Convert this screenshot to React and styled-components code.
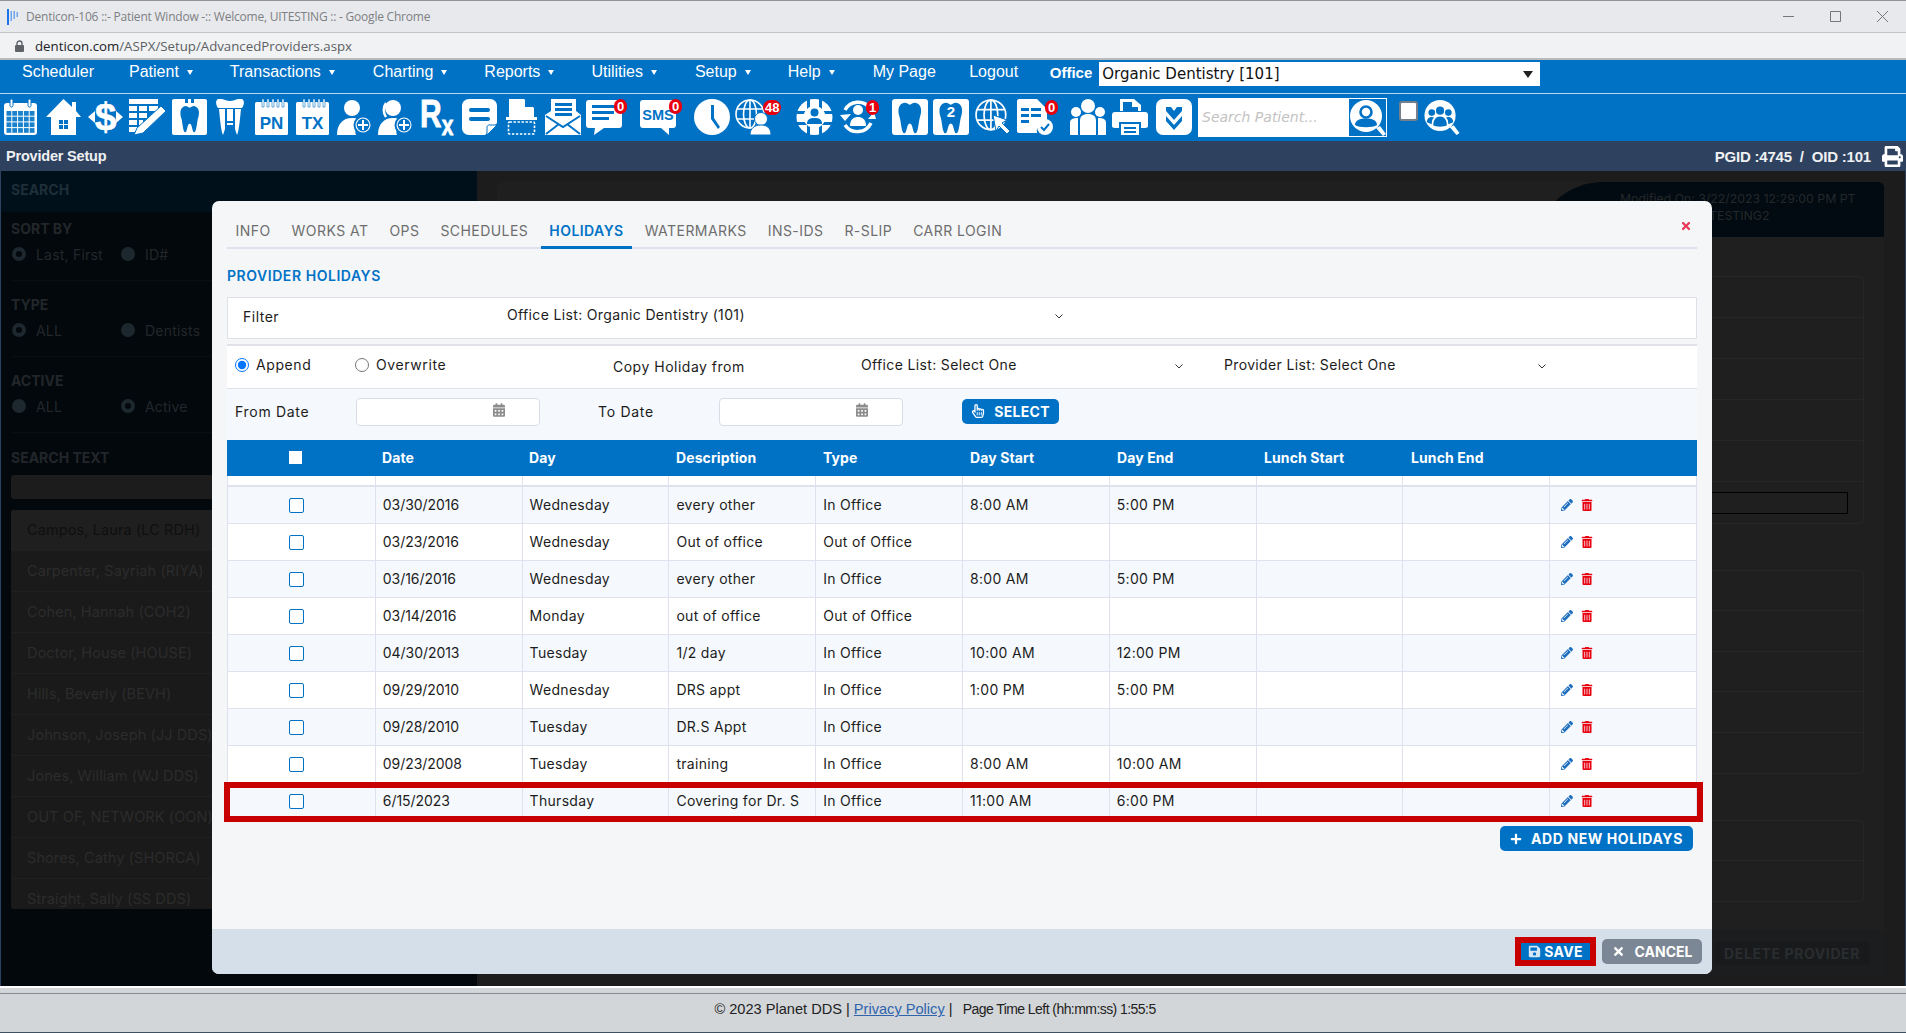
import styled, { createGlobalStyle } from "styled-components";
import { FaCalendarAlt, FaPencilAlt, FaPlus, FaPrint, FaRegHandPointer, FaSave, FaTimes, FaTrashAlt } from "react-icons/fa";

const BLUE = "#0072c6";
const MODAL_FONT = '"Inter", "Open Sans", sans-serif';

const GlobalStyle = createGlobalStyle`
  html, body { margin: 0; height: 100%; }
  #root { height: 100%; }
  *, *::before, *::after { box-sizing: border-box; }
`;

const Page = styled.div`
  height: 1033px;
  display: flex;
  flex-direction: column;
  overflow: hidden;
  font-family: "Liberation Sans", Arial, sans-serif;
  background: #1c1c1c;
`;

/* browser chrome */
const TitleBar = styled.div`
  height: 32px;
  flex: none;
  display: flex;
  align-items: center;
  padding: 0 0 0 7px;
  background: #e8e9ed;
  border-top: 1px solid #8f9296;
  font: 12px "Open Sans", sans-serif;
  color: #7d7f83;
`;

const WindowTitle = styled.span`
  margin-left: 8px;
  flex: 1;
  letter-spacing: -0.22px;
`;

const WindowButtons = styled.div`
  display: flex;
  align-items: center;
  gap: 36px;
  padding-right: 18px;
  svg { display: block; }
`;

const AddressBar = styled.div`
  height: 28px;
  flex: none;
  display: flex;
  align-items: center;
  gap: 11px;
  padding-left: 15px;
  background: #f1f2f4;
  border-top: 1px solid #c2c3c6;
  border-bottom: 2px solid #b9babc;
  font: 13.25px "Open Sans", sans-serif;
  color: #5c5f63;
  b { font-weight: 400; color: #202124; }
`;

/* app menu */
const MenuBar = styled.nav`
  height: 34px;
  flex: none;
  display: flex;
  align-items: center;
  padding-left: 22px;
  background: ${BLUE};
  border-bottom: 1px solid #b9d7ee;
  color: #fff;
  font-size: 16px;
`;

const MenuItem = styled.span`
  display: flex;
  align-items: center;
  margin-right: ${(p) => p.$gap}px;
  padding-bottom: 9px;
  white-space: nowrap;
  &::after {
    content: ${(p) => (p.$caret ? '""' : "none")};
    margin-left: 8px;
    border: 3.5px solid transparent;
    border-top: 5px solid #fff;
    border-bottom: 0;
  }
`;

const OfficeLabel = styled.span`
  font-weight: 700;
  font-size: 15px;
  margin-right: 7px;
  padding-bottom: 9px;
`;

const OfficeSelect = styled.div`
  width: 441px;
  height: 24px;
  margin-bottom: 5px;
  display: flex;
  align-items: center;
  justify-content: space-between;
  padding: 0 7px 0 3px;
  background: #fff;
  color: #111;
  font: 15px "DejaVu Sans", sans-serif;
  &::after {
    content: "";
    border: 5px solid transparent;
    border-top: 7px solid #222;
    border-bottom: 0;
  }
`;

const ToolBar = styled.div`
  height: 47px;
  flex: none;
  display: flex;
  align-items: center;
  padding: 0 0 1px 4px;
  background: ${BLUE};
`;

const ToolSlot = styled.div`
  position: relative;
  flex: none;
  width: ${(p) => p.$w}px;
  height: 36px;
  svg { display: block; height: 36px; fill: #fff; }
`;

const TallSvg = styled.svg`
  ${ToolSlot} && {
    height: ${(p) => p.$h}px;
    margin-top: ${(p) => (36 - p.$h) / 2}px;
  }
`;

const Badge = styled.span`
  position: absolute;
  top: ${(p) => p.$top ?? 0}px;
  left: ${(p) => p.$left}px;
  min-width: 13px;
  height: 15px;
  padding: 0 2px;
  border-radius: 8px;
  background: #e8000f;
  color: #fff;
  font: 700 13px/15px "Liberation Sans", sans-serif;
  text-align: center;
`;

const PatientSearch = styled.div`
  flex: none;
  width: 189px;
  height: 39px;
  margin-right: 12px;
  display: flex;
  align-items: center;
  background: #fff;
  border: 1px solid #fff;
`;

const PatientInput = styled.input`
  flex: 1;
  min-width: 0;
  height: 100%;
  border: 0;
  outline: 0;
  padding: 0 0 0 3px;
  background: transparent;
  font: italic 14px "DejaVu Sans", sans-serif;
  &::placeholder { color: #c3c3c3; opacity: 1; }
`;

const PatientButton = styled.div`
  flex: none;
  width: 37px;
  height: 37px;
  background: ${BLUE};
  svg { display: block; }
`;

const ToolCheck = styled.span`
  flex: none;
  width: 19px;
  height: 20px;
  margin: -13px 5px 0 0;
  background: #fff;
  border: 2px solid #77808a;
  border-radius: 3px;
`;

const PageTitle = styled.div`
  height: 30px;
  flex: none;
  display: flex;
  align-items: center;
  justify-content: space-between;
  padding: 0 3px 0 6px;
  background: #2e4260;
  color: #eef0f2;
  font-weight: 700;
  font-size: 14.5px;
  letter-spacing: -0.2px;
`;

const TitleRight = styled.div`
  display: flex;
  align-items: center;
  gap: 11px;
  font-size: 15px;
  white-space: pre;
  svg { width: 21px; height: 21px; fill: #fff; }
`;

/* dimmed page behind the dialog */
const Workspace = styled.main`
  position: relative;
  flex: 1;
  min-height: 0;
  display: flex;
  background: #1c1c1c;
  border-left: 1px solid #2e4260;
  border-right: 1px solid #2e4260;
`;

const Sidebar = styled.aside`
  width: 476px;
  flex: none;
  background: #03080c;
  font: 600 14px ${MODAL_FONT};
  color: #20262a;
`;

const SideHead = styled.div`
  height: 41px;
  display: flex;
  align-items: center;
  padding: 0 10px 4px;
  background: #00101a;
  color: #1f2e38;
  font-weight: 700;
`;

const SideSection = styled.section`
  height: ${(p) => p.$h}px;
  margin: 0 10px;
  display: flex;
  flex-direction: column;
  justify-content: flex-end;
  padding-bottom: 18px;
  border-bottom: 1px solid #0b0e10;
`;

const SideLabel = styled.div`
  height: 16px;
  line-height: 16px;
  margin-bottom: 9px;
  font-weight: 700;
  color: #22262a;
`;

const SideChoices = styled.div`
  display: grid;
  grid-template-columns: 109px 200px;
`;

const SideChoice = styled.span`
  display: flex;
  align-items: center;
  gap: 10px;
  height: 16px;
  font-weight: 400;
  letter-spacing: 0.2px;
  color: #22272b;
  &::before {
    content: "";
    width: 14px;
    height: 14px;
    border-radius: 50%;
    margin-left: 1px;
    background: ${(p) => (p.$on ? "#03080c" : "#1d272e")};
    border: ${(p) => (p.$on ? "4px solid #1d272e" : "0")};
  }
`;

const SideSearch = styled.div`
  margin: 0 10px;
  padding-top: 17px;
`;

const SideField = styled.div`
  height: 24px;
  margin-top: 0;
  background: #1c1c1c;
  border-radius: 3px;
`;

const SideList = styled.ul`
  list-style: none;
  margin: 11px 10px 0;
  padding: 0;
  height: 399px;
  overflow: hidden;
  background: #1a1a1a;
  border-radius: 3px;
`;

const SideItem = styled.li`
  height: 41px;
  line-height: 39px;
  padding-left: 16px;
  border-bottom: 1px solid #202020;
  font-weight: 400;
  font-size: 14.5px;
  letter-spacing: 0.1px;
  white-space: nowrap;
  color: ${(p) => (p.$on ? "#0f0f0f" : "#2c2c2c")};
  background: ${(p) => (p.$on ? "#1f1f1f" : "transparent")};
`;

const DetailCard = styled.div`
  flex: 1;
  margin: 11px 21px 0 20px;
  height: 794px;
  display: flex;
  flex-direction: column;
  background: #1f1f1f;
  border-radius: 6px 6px 0 0;
`;

const DetailHead = styled.div`
  height: 55px;
  flex: none;
  display: flex;
  justify-content: flex-end;
`;

const HeadTag = styled.div`
  width: 344px;
  padding: 8px 0 0 80px;
  background: #020b11;
  border-radius: 70px 6px 0 0 / 60px 6px 0 0;
  font: 400 12.3px/17px ${MODAL_FONT};
  color: #24282b;
  white-space: nowrap;
`;

const DetailGroups = styled.div`
  flex: 1;
  display: flex;
  flex-direction: column;
  gap: 46px;
  padding: 39px 20px 0 14px;
`;

const DetailGroup = styled.div`
  border: 1px solid #262626;
  border-radius: 4px;
`;

const DetailRow = styled.div`
  height: ${(p) => p.$h ?? 41}px;
  display: flex;
  align-items: center;
  justify-content: flex-end;
  padding-right: 15px;
  border-bottom: 1px solid #262626;
  &:last-child { border-bottom: 0; }
`;

const BlackField = styled.div`
  width: 400px;
  height: 22px;
  border: 1px solid #000;
`;

const DetailFoot = styled.div`
  height: 46px;
  flex: none;
  display: flex;
  align-items: center;
  justify-content: flex-end;
  padding-right: 14px;
  background: #1c1d1e;
`;

const DeleteButton = styled.div`
  height: 24px;
  padding: 0 10px;
  display: flex;
  align-items: center;
  border-radius: 5px;
  background: #181a1b;
  color: #2a2d30;
  font: 700 14px ${MODAL_FONT};
  letter-spacing: 0.6px;
`;

/* dialog */
const Modal = styled.section`
  position: absolute;
  top: 30px;
  left: 211px;
  width: 1500px;
  height: 773px;
  display: flex;
  flex-direction: column;
  background: #f5f6f8;
  border-radius: 7px;
  font: 400 14px ${MODAL_FONT};
  color: #1c1c1c;
`;

const ModalBody = styled.div`
  flex: 1;
  padding: 0 15px;
  position: relative;
`;

const CloseButton = styled.span`
  position: absolute;
  top: 19px;
  right: 20px;
  color: #ea3a55;
  font-size: 12px;
  line-height: 12px;
  svg { display: block; }
`;

const Tabs = styled.div`
  height: 48px;
  display: flex;
  gap: 4px;
  border-bottom: 2px solid #dfe1ee;
`;

const Tab = styled.span`
  height: 48px;
  padding: 14px 8.5px 0;
  display: flex;
  align-items: center;
  font-size: 14px;
  letter-spacing: 0.45px;
  white-space: nowrap;
  color: ${(p) => (p.$on ? BLUE : "#6e6e6e")};
  font-weight: ${(p) => (p.$on ? 600 : 400)};
  border-bottom: 3px solid ${(p) => (p.$on ? BLUE : "transparent")};
`;

const SectionTitle = styled.h2`
  margin: 0;
  height: 48px;
  display: flex;
  align-items: center;
  padding-top: 5px;
  font-size: 14px;
  font-weight: 600;
  color: ${BLUE};
  letter-spacing: 0.55px;
`;

const Caption = styled.span`
  letter-spacing: ${(p) => p.$sp ?? 0.5}px;
  white-space: nowrap;
`;

const FilterBox = styled.div`
  height: 42px;
  display: grid;
  grid-template-columns: 264px 556px;
  align-items: center;
  padding: 0 0 4px 15px;
  background: #fff;
  border: 1px solid #dfe1e8;
  margin-bottom: 5px;
`;

const Dropdown = styled.div`
  display: flex;
  align-items: center;
  justify-content: space-between;
  padding-right: ${(p) => p.$pr ?? 0}px;
  span { position: relative; top: -2px; letter-spacing: 0.35px; white-space: nowrap; }
  svg { display: block; }
`;

const CopyRow = styled.div`
  height: 45px;
  display: grid;
  grid-template-columns: 120px 258px 248px 363px 322px;
  align-items: center;
  padding: 0 0 2px 8px;
  background: #fff;
  border-top: 2px solid #e0e2e8;
  border-bottom: 1px solid #e0e2e8;
`;

const RadioLabel = styled.label`
  display: flex;
  align-items: center;
  gap: 7px;
  margin-top: -3px;
  letter-spacing: 0.6px;
  input { width: 14px; height: 14px; margin: 0; }
`;

const DateRow = styled.div`
  height: 51px;
  display: grid;
  grid-template-columns: 121px 184px 58px 121px 184px 59px 97px;
  align-items: center;
  padding: 0 0 6px 8px;
  background: #f5f9fd;
`;

const DateField = styled.div`
  height: 28px;
  display: flex;
  align-items: center;
  justify-content: flex-end;
  padding-right: 34px;
  background: #fff;
  border: 1px solid #d8dde6;
  border-radius: 4px;
  svg { display: block; width: 12px; height: 14px; fill: #8c8c8c; margin-top: -3px; }
`;

const SmallButton = styled.button`
  height: 25px;
  padding: 0;
  display: flex;
  align-items: center;
  justify-content: center;
  gap: ${(p) => p.$gap}px;
  width: ${(p) => p.$w}px;
  margin-top: ${(p) => (p.$up ? -p.$up : 0)}px;
  border: 0;
  border-radius: 5px;
  background: ${(p) => p.$bg ?? BLUE};
  color: #fff;
  font: 700 14px ${MODAL_FONT};
  letter-spacing: ${(p) => p.$sp ?? 0}px;
  white-space: nowrap;
  svg { display: block; }
`;

const HeadRow = styled.div`
  height: 36px;
  display: grid;
  grid-template-columns: repeat(10, 1fr);
  align-items: center;
  padding-bottom: 1px;
  background: ${BLUE};
  color: #fff;
  font-weight: 700;
  font-size: 14px;
  letter-spacing: 0.1px;
`;

const Row = styled.div`
  position: relative;
  height: ${(p) => p.$h ?? 37}px;
  display: grid;
  grid-template-columns: repeat(10, 1fr);
  background: ${(p) => (p.$tint ? "#f5f9fd" : "#fff")};
  border-left: 1px solid #dfe1ee;
  border-right: 1px solid #dfe1ee;
  border-bottom: ${(p) => (p.$h ? 2 : 1)}px solid #dfe1ee;
  &::after {
    content: ${(p) => (p.$marked ? '""' : "none")};
    position: absolute;
    inset: -1px -7px -3px -4px;
    border: 6px solid #c90000;
  }
`;

const Cell = styled.div`
  display: flex;
  align-items: center;
  padding: 0 0 1px 7px;
  border-left: 1px solid #dfe1ee;
  white-space: nowrap;
  letter-spacing: ${(p) => (p.$tight ? -0.05 : 0.3)}px;
  &:first-child { border-left: 0; justify-content: center; padding: 0 10px 0 0; }
`;

const HeadCell = styled.div`
  padding-left: 8px;
  &:first-child { display: flex; justify-content: center; padding: 0 10px 0 0; }
`;

const HeadCheck = styled.span`
  width: 13px;
  height: 13px;
  background: #fff;
`;

const RowCheck = styled.input.attrs({ type: "checkbox" })`
  appearance: none;
  width: 15px;
  height: 15px;
  margin: 0;
  background: #fff;
  border: 1.5px solid ${BLUE};
  border-radius: 2px;
`;

const ActionCell = styled(Cell)`
  gap: 8px;
  padding-left: 11px;
  svg { display: block; height: 12px; width: auto; }
`;

const AddLine = styled.div`
  display: flex;
  justify-content: flex-end;
  padding: 6px 4px 0 0;
`;

const ModalFoot = styled.div`
  height: 45px;
  flex: none;
  display: flex;
  align-items: center;
  justify-content: flex-end;
  gap: 6px;
  padding-right: 10px;
  background: #d5dfe9;
  border-radius: 0 0 7px 7px;
`;

const SaveButton = styled.button`
  width: 81px;
  height: 29px;
  padding: 0;
  display: flex;
  align-items: center;
  justify-content: center;
  gap: 3px;
  border: 6px solid #c90000;
  background: ${BLUE};
  color: #fff;
  font: 700 14px ${MODAL_FONT};
  letter-spacing: 0.3px;
  svg { display: block; width: 13px; height: 13px; fill: #d5e6f5; }
`;

/* footer */
const PageFoot = styled.footer`
  height: 47px;
  flex: none;
  padding-top: 5px;
  background: #d2d6d9;
  border-top: 2px solid #fff;
  border-bottom: 1px solid #3e5060;
`;

const FootLine = styled.div`
  height: 100%;
  display: flex;
  align-items: center;
  justify-content: center;
  padding: 0 36px 8px 0;
  border-top: 1px solid #858b90;
  font-size: 14.6px;
  color: #222;
  white-space: pre;
  a { color: #2f64ad; text-decoration: underline; }
`;

const TimeLeft = styled.span`
  margin-left: 2px;
  font-size: 14px;
  letter-spacing: -0.56px;
`;

/* toolbar drawings */
const tooth = "M11 6C14 4 16 6 18 7C20 6 22 4 25 6C29 8 29 14 27 19C26 23 25.5 33 23 33C20.5 33 21 24 18 24C15 24 15.5 33 13 33C10.5 33 10 23 9 19C7 14 7 8 11 6Z";

const IconText = styled.text`
  font-family: "Liberation Sans", sans-serif;
  font-weight: 700;
`;

const Calendar = () => (
  <svg viewBox="0 0 33 36" width="33">
    <rect y="4" width="33" height="32" rx="3" />
    <rect x="6" y="0" width="3" height="8" rx="1.5" stroke={BLUE} />
    <rect x="24" y="0" width="3" height="8" rx="1.5" stroke={BLUE} />
    {[0, 1, 2, 3].map((r) =>
      [0, 1, 2, 3, 4].map((c) => <rect key={`${r}${c}`} x={2.5 + c * 5.8} y={12 + r * 5.7} width="4.8" height="4.7" fill="#1a82cd" />)
    )}
  </svg>
);

const Home = () => (
  <svg viewBox="0 0 35 36" width="35">
    <path d="M17.5 0L26 8V3H30V12L35 18H30V36H5V18H0Z" />
    <path d="M13 21H22V30H13Z" fill={BLUE} />
    <path d="M17 21H18V30H17ZM13 25H22V26H13Z" />
  </svg>
);

const Dollar = () => (
  <TallSvg viewBox="0 -6 35 48" width="35" $h={48}>
    <IconText x="17.5" y="31" fontSize="39" textAnchor="middle" stroke="#fff" strokeWidth=".5">$</IconText>
    <path d="M0 18L7 12V24ZM35 18L28 12V24Z" />
  </TallSvg>
);

const TablePen = () => (
  <svg viewBox="0 0 37 36" width="37">
    <path d="M0 0H29V5H0ZM0 7H8V12H0ZM10 7H18V12H10ZM20 7H29V12H20ZM0 14H8V19H0ZM10 14H18V19H10ZM0 21H8V26H0ZM10 21H14V26H10ZM0 28H8V33H0Z" />
    <path d="M32 7L37 12L14 34L5 36L8 29Z" stroke={BLUE} strokeWidth="1" />
  </svg>
);

const ToothCard = () => (
  <svg viewBox="0 0 35 36" width="35">
    <rect width="35" height="36" rx="2" />
    <path d="M13 0H16V4H13ZM19 0H22V4H19Z" fill={BLUE} />
    <path d={tooth} fill={BLUE} transform="translate(1.5 2) scale(.9 .95)" />
  </svg>
);

const Implant = () => (
  <svg viewBox="0 0 28 36" width="28">
    <path d="M2 0C6 -1 10 2 14 2C18 2 22 -1 26 0C29 2 28 6 26 9H2C0 6 -1 2 2 0Z" />
    <path d="M3 10H9V30L7 36C5 32 4 20 3 10ZM11 10H17V22H11ZM19 10H25C24 20 23 32 21 36L19 30Z" />
    <path d="M11 24H17V26H11Z" />
  </svg>
);

const NoteCard = ({ label }) => (
  <svg viewBox="0 0 33 36" width="33">
    <rect y="3" width="33" height="33" rx="1.5" />
    <path d="M7 0H9V8H7ZM12 0H14V8H12ZM17 0H19V8H17ZM22 0H24V8H22ZM27 0H29V8H27Z" stroke={BLUE} strokeWidth=".6" />
    <IconText x="16.5" y="30" fontSize="17" textAnchor="middle" fill={BLUE}>{label}</IconText>
  </svg>
);

const PersonPlus = ({ second }) => (
  <svg viewBox="0 0 36 36" width="36">
    {second && <path d="M8 4C5 8 5 14 8 18" fill="none" stroke="#fff" strokeWidth="2.5" />}
    <circle cx="15" cy="9" r="8" />
    <path d="M0 36C0 25 6 19 15 19C20 19 24 21 26 24C20 25 17 31 19 36Z" />
    <circle cx="26" cy="26" r="8.5" fill="#fff" stroke={BLUE} strokeWidth="2" />
    <circle cx="26" cy="26" r="6.4" fill={BLUE} />
    <path d="M25 21H27V25H31V27H27V31H25V27H21V25H25Z" />
  </svg>
);

const Rx = () => (
  <TallSvg viewBox="0 -10 34 56" width="34" $h={56}>
    <g transform="scale(1 1.32)">
      <IconText x="0" y="21.500" stroke="#fff" strokeWidth=".6">
        <tspan fontSize="30">R</tspan>
        <tspan fontSize="21" dy="5.700">x</tspan>
      </IconText>
    </g>
  </TallSvg>
);

const Sticky = () => (
  <svg viewBox="0 0 35 36" width="35">
    <path d="M7 0H28C32 0 35 3 35 7V24L23 36H7C3 36 0 33 0 29V7C0 3 3 0 7 0Z" />
    <rect x="7" y="9" width="21" height="4" rx="2" fill={BLUE} />
    <rect x="7" y="18" width="21" height="4" rx="2" fill={BLUE} />
    <path d="M35 26L25 36V28C25 27 26 26 27 26Z" stroke={BLUE} />
  </svg>
);

const Scan = () => (
  <svg viewBox="0 0 31 36" width="31">
    <path d="M3 0H18L28 9V18H3ZM19 1V8H27Z" />
    <path d="M0 18H31V21H0Z" />
    <rect x="2.5" y="23" width="26" height="12" rx="1" fill="none" stroke="#fff" strokeWidth="1.6" strokeDasharray="2.4 1.6" />
  </svg>
);

const Envelope = () => (
  <svg viewBox="0 0 36 36" width="36">
    <path d="M6 0H31V12L36 16V36H0V16L6 12Z" />
    <path d="M10 4H27V7H10ZM10 9H27V12H10ZM10 14H27V17H10Z" fill={BLUE} />
    <path d="M1 17L18 28L35 17M1 35L14 25M35 35L22 25" fill="none" stroke={BLUE} strokeWidth="2" />
  </svg>
);

const Speech = () => (
  <svg viewBox="0 0 36 36" width="36">
    <path d="M3 1H33C35 1 36 2 36 4V26C36 28 35 29 33 29H18L8 36L9 29H3C1 29 0 28 0 26V4C0 2 1 1 3 1Z" />
    <path d="M6 6H28V9H6ZM6 12H28V15H6ZM6 18H23V21H6Z" fill={BLUE} />
  </svg>
);

const SmsBubble = () => (
  <svg viewBox="0 0 36 36" width="36">
    <path d="M3 1H33C35 1 36 2 36 4V26C36 28 35 29 33 29H29V36L21 29H3C1 29 0 28 0 26V4C0 2 1 1 3 1Z" />
    <IconText x="18" y="21" fontSize="14.5" textAnchor="middle" fill={BLUE}>SMS</IconText>
  </svg>
);

const Clock = () => (
  <svg viewBox="0 0 36 36" width="36">
    <circle cx="18" cy="18" r="18" />
    <path d="M17 6H20V19L26 28L24 30L17 20Z" fill={BLUE} />
  </svg>
);

const GlobeLines = () => (
  <g fill="none" stroke="#fff" strokeWidth="1.6">
    <circle cx="15" cy="15" r="14" />
    <ellipse cx="15" cy="15" rx="6.5" ry="14" />
    <path d="M15 1V29M2 10H28M2 20H28" />
  </g>
);

const GlobePerson = () => (
  <svg viewBox="0 0 36 36" width="36">
    <GlobeLines />
    <circle cx="26" cy="20" r="6.5" stroke={BLUE} />
    <path d="M15 36C15 29 20 26 26 26C32 26 36 29 36 36Z" stroke={BLUE} />
  </svg>
);

const GlobeBadge = () => (
  <svg viewBox="0 0 37 36" width="37">
    <circle cx="18.5" cy="18" r="18" />
    <path d="M0 12H37V15H0ZM0 23H37V26H0ZM11 0H14V36H11ZM23 0H26V36H23Z" fill={BLUE} />
    <circle cx="18.5" cy="18" r="11" />
    <circle cx="18.5" cy="13.5" r="4" fill={BLUE} />
    <path d="M11 25C11 20 14 19 18.5 19C23 19 26 20 26 25Z" fill={BLUE} />
  </svg>
);

const History = () => (
  <svg viewBox="0 0 36 36" width="36">
    <path d="M30 9A15 15 0 0 0 5 11M5 26A15 15 0 0 0 31 24" fill="none" stroke="#fff" strokeWidth="3.4" />
    <path d="M0 16L5 22L11 15ZM28 20L34 13L36 20Z" />
    <circle cx="18" cy="11" r="5" />
    <path d="M10 27C10 20 14 18 18 18C22 18 26 20 26 27Z" />
  </svg>
);

const ToothBox = ({ num }) => (
  <svg viewBox="0 0 36 36" width="36">
    <rect width="36" height="36" rx="3" />
    <path d={tooth} fill={BLUE} transform="translate(-2 -2) scale(1.1 1.1)" />
    {num && <IconText x="18" y="18" fontSize="15" textAnchor="middle">2</IconText>}
  </svg>
);

const GlobeCursor = () => (
  <svg viewBox="0 0 35 36" width="35">
    <g transform="scale(1.06)"><GlobeLines /></g>
    <path d="M18 16L32 21L27 24L35 32L32 35L24 27L21 32Z" stroke={BLUE} />
  </svg>
);

const DocCheck = () => (
  <svg viewBox="0 0 36 36" width="36">
    <path d="M2 0H20L30 10V22C23 22 19 27 20 34H2C1 34 0 33 0 32V2C0 1 1 0 2 0Z" />
    <path d="M4 9H12V12H4ZM14 9H24V12H14ZM4 15H12V18H4ZM14 15H24V18H14ZM4 21H12V24H4Z" fill={BLUE} />
    <circle cx="28" cy="28" r="8" />
    <path d="M24 28L27 31L32 25" fill="none" stroke={BLUE} strokeWidth="2" />
  </svg>
);

const People = () => (
  <svg viewBox="0 0 36 36" width="36">
    <circle cx="6" cy="13" r="5" />
    <circle cx="30" cy="13" r="5" />
    <circle cx="18" cy="7" r="7" />
    <path d="M0 36V24C0 20 3 19 8 19V36ZM36 36V24C36 20 33 19 28 19V36ZM10 36V22C10 17 13 15 18 15C23 15 26 17 26 22V36Z" />
  </svg>
);

const Printer = () => (
  <svg viewBox="0 0 36 36" width="36">
    <path d="M8 0H22L29 6V12H26V8H20V3H11V12H8Z" />
    <path d="M3 13H33C35 13 36 14 36 16V27C36 28 35 29 33 29H29V23H7V29H3C1 29 0 28 0 27V16C0 14 1 13 3 13Z" />
    <path d="M9 25H27V36H9ZM12 28V30H24V28ZM12 32V34H24V32Z" fillRule="evenodd" />
  </svg>
);

const Chevrons = () => (
  <svg viewBox="0 0 36 36" width="36">
    <rect width="36" height="36" rx="7" />
    <path d="M10 8H15L18 12L21 8H26V12L18 21L10 12ZM10 17L18 26L26 17V22L18 31L10 22Z" fill={BLUE} />
  </svg>
);

const SearchFace = () => (
  <svg viewBox="0 0 37 37" width="37" height="37">
    <path d="M27 29L31 27L37 35L34 37Z" fill="#fff" />
    <circle cx="17" cy="17" r="16" fill="#fff" />
    <circle cx="17" cy="13" r="5.5" fill="none" stroke={BLUE} strokeWidth="2.6" />
    <path d="M6 26C6 21 11 19.500 17 19.500C23 19.500 28 21 28 26C24 29 10 29 6 26Z" fill={BLUE} />
  </svg>
);

const SearchGroup = () => (
  <svg viewBox="0 0 37 37" width="37" height="37">
    <path d="M27 29L31 27L37 35L34 37Z" fill="#fff" />
    <circle cx="17" cy="17" r="16" fill="#fff" />
    <g fill={BLUE}>
      <circle cx="8.500" cy="14" r="3.400" />
      <circle cx="25.500" cy="14" r="3.400" />
      <path d="M3.500 24C3.500 20 6 18.500 8.500 18.500C9.500 18.500 10 18.700 11 19C9 20.500 8.500 23 8.500 26ZM30.500 24C30.500 20 28 18.500 25.500 18.500C24.500 18.500 24 18.700 23 19C25 20.500 25.500 23 25.500 26Z" />
      <circle cx="17" cy="12" r="4.200" />
      <path d="M10 27C10 21 13 18 17 18C21 18 24 21 24 27C21 29 13 29 10 27Z" />
    </g>
  </svg>
);

const tools = [
  { w: 42, node: <Calendar /> },
  { w: 42, node: <Home /> },
  { w: 41, node: <Dollar /> },
  { w: 43, node: <TablePen /> },
  { w: 44, node: <ToothCard /> },
  { w: 39, node: <Implant /> },
  { w: 41, node: <NoteCard label="PN" /> },
  { w: 41, node: <NoteCard label="TX" /> },
  { w: 41, node: <PersonPlus /> },
  { w: 42, node: <PersonPlus second /> },
  { w: 42, node: <Rx /> },
  { w: 44, node: <Sticky /> },
  { w: 39, node: <Scan /> },
  { w: 41, node: <Envelope /> },
  { w: 54, node: <Speech />, badge: { text: "0", left: 28 } },
  { w: 54, node: <SmsBubble />, badge: { text: "0", left: 29 } },
  { w: 41, node: <Clock /> },
  { w: 61, node: <GlobePerson />, badge: { text: "48", left: 28, top: 1 } },
  { w: 44, node: <GlobeBadge /> },
  { w: 52, node: <History />, badge: { text: "1", left: 26, top: 1 } },
  { w: 41, node: <ToothBox /> },
  { w: 42, node: <ToothBox num /> },
  { w: 42, node: <GlobeCursor /> },
  { w: 53, node: <DocCheck />, badge: { text: "0", left: 28, top: 1 } },
  { w: 42, node: <People /> },
  { w: 44, node: <Printer /> },
  { w: 42, node: <Chevrons /> },
];

const menu = [
  { label: "Scheduler", gap: 35 },
  { label: "Patient", caret: true, gap: 37 },
  { label: "Transactions", caret: true, gap: 38 },
  { label: "Charting", caret: true, gap: 37 },
  { label: "Reports", caret: true, gap: 37 },
  { label: "Utilities", caret: true, gap: 38 },
  { label: "Setup", caret: true, gap: 37 },
  { label: "Help", caret: true, gap: 38 },
  { label: "My Page", gap: 33.4 },
  { label: "Logout", gap: 31.6 },
];

const providers = [
  "Campos, Laura (LC RDH)",
  "Carpenter, Sayriah (RIYA)",
  "Cohen, Hannah (COH2)",
  "Doctor, House (HOUSE)",
  "Hills, Beverly (BEVH)",
  "Johnson, Joseph (JJ DDS)",
  "Jones, William (WJ DDS)",
  "OUT OF, NETWORK (OON)",
  "Shores, Cathy (SHORCA)",
  "Straight, Sally (SS DDS)",
];

const tabs = ["INFO", "WORKS AT", "OPS", "SCHEDULES", "HOLIDAYS", "WATERMARKS", "INS-IDS", "R-SLIP", "CARR LOGIN"];
const columns = ["Date", "Day", "Description", "Type", "Day Start", "Day End", "Lunch Start", "Lunch End"];

const holidays = [
  ["03/30/2016", "Wednesday", "every other", "In Office", "8:00 AM", "5:00 PM"],
  ["03/23/2016", "Wednesday", "Out of office", "Out of Office", "", ""],
  ["03/16/2016", "Wednesday", "every other", "In Office", "8:00 AM", "5:00 PM"],
  ["03/14/2016", "Monday", "out of office", "Out of Office", "", ""],
  ["04/30/2013", "Tuesday", "1/2 day", "In Office", "10:00 AM", "12:00 PM"],
  ["09/29/2010", "Wednesday", "DRS appt", "In Office", "1:00 PM", "5:00 PM"],
  ["09/28/2010", "Tuesday", "DR.S Appt", "In Office", "", ""],
  ["09/23/2008", "Tuesday", "training", "In Office", "8:00 AM", "10:00 AM"],
  ["6/15/2023", "Thursday", "Covering for Dr. S", "In Office", "11:00 AM", "6:00 PM"],
];

const Chevron = () => (
  <svg width="8" height="5" viewBox="0 0 8 5">
    <path d="M.5.5L4 4L7.5.5" fill="none" stroke="#333" />
  </svg>
);

export default function App() {
  return (
    <Page>
      <GlobalStyle />
      <TitleBar>
        <svg width="11" height="16" viewBox="0 0 11 16">
          <path d="M0 0H2V16H0Z" fill="#1a73e8" />
          <path d="M3.5 2H5V12H3.5ZM6.5 2H8V10H6.5ZM9.500 3H11V8H9.500Z" fill="#6aa5ee" />
        </svg>
        <WindowTitle>Denticon-106 ::- Patient Window -:: Welcome, UITESTING :: - Google Chrome</WindowTitle>
        <WindowButtons>
          <svg width="11" height="11" viewBox="0 0 11 11"><path d="M0 5.500H11" stroke="#777" /></svg>
          <svg width="11" height="11" viewBox="0 0 11 11"><path d="M.5.500H10.500V10.500H.5Z" fill="none" stroke="#777" /></svg>
          <svg width="11" height="11" viewBox="0 0 11 11"><path d="M0 0L11 11M11 0L0 11" stroke="#777" /></svg>
        </WindowButtons>
      </TitleBar>
      <AddressBar>
        <svg width="9" height="12" viewBox="0 0 9 12">
          <path d="M2 5V3.500A2.500 2.500 0 0 1 7 3.500V5" fill="none" stroke="#5f6368" strokeWidth="1.400" />
          <rect y="5" width="9" height="7" rx="1" fill="#5f6368" />
        </svg>
        <span><b>denticon.com</b>/ASPX/Setup/AdvancedProviders.aspx</span>
      </AddressBar>
      <MenuBar>
        {menu.map((m) => (
          <MenuItem key={m.label} $caret={m.caret} $gap={m.gap}>{m.label}</MenuItem>
        ))}
        <OfficeLabel>Office</OfficeLabel>
        <OfficeSelect>Organic Dentistry [101]</OfficeSelect>
      </MenuBar>
      <ToolBar>
        {tools.map((t, i) => (
          <ToolSlot key={i} $w={t.w}>
            {t.node}
            {t.badge && <Badge $left={t.badge.left} $top={t.badge.top}>{t.badge.text}</Badge>}
          </ToolSlot>
        ))}
        <PatientSearch>
          <PatientInput placeholder="Search Patient..." />
          <PatientButton><SearchFace /></PatientButton>
        </PatientSearch>
        <ToolCheck />
        <ToolSlot $w={38}><SearchGroup /></ToolSlot>
      </ToolBar>
      <PageTitle>
        Provider Setup
        <TitleRight>PGID :4745  /  OID :101<FaPrint /></TitleRight>
      </PageTitle>

      <Workspace>
        <Sidebar>
          <SideHead>SEARCH</SideHead>
          <SideSection $h={69}>
            <SideLabel>SORT BY</SideLabel>
            <SideChoices>
              <SideChoice $on>Last, First</SideChoice>
              <SideChoice>ID#</SideChoice>
            </SideChoices>
          </SideSection>
          <SideSection $h={76}>
            <SideLabel>TYPE</SideLabel>
            <SideChoices>
              <SideChoice $on>ALL</SideChoice>
              <SideChoice>Dentists</SideChoice>
            </SideChoices>
          </SideSection>
          <SideSection $h={76}>
            <SideLabel>ACTIVE</SideLabel>
            <SideChoices>
              <SideChoice>ALL</SideChoice>
              <SideChoice $on>Active</SideChoice>
            </SideChoices>
          </SideSection>
          <SideSearch>
            <SideLabel>SEARCH TEXT</SideLabel>
            <SideField />
          </SideSearch>
          <SideList>
            {providers.map((p, i) => (
              <SideItem key={p} $on={i === 0}>{p}</SideItem>
            ))}
          </SideList>
        </Sidebar>
        <DetailCard>
          <DetailHead>
            <HeadTag>
              Modified On: 3/22/2023 12:29:00 PM PT
              <br />
              Modified By: UITESTING2
            </HeadTag>
          </DetailHead>
          <DetailGroups>
            <DetailGroup>
              <DetailRow /><DetailRow /><DetailRow /><DetailRow /><DetailRow />
              <DetailRow><BlackField /></DetailRow>
            </DetailGroup>
            <DetailGroup>
              {[0, 1, 2, 3, 4].map((i) => <DetailRow key={i} $h={40.4} />)}
            </DetailGroup>
            <DetailGroup>
              <DetailRow $h={40} /><DetailRow $h={40} />
            </DetailGroup>
          </DetailGroups>
          <DetailFoot><DeleteButton>DELETE PROVIDER</DeleteButton></DetailFoot>
        </DetailCard>

        <Modal>
          <ModalBody>
            <CloseButton><FaTimes /></CloseButton>
            <Tabs>
              {tabs.map((t) => (
                <Tab key={t} $on={t === "HOLIDAYS"}>{t}</Tab>
              ))}
            </Tabs>
            <SectionTitle>PROVIDER HOLIDAYS</SectionTitle>
            <FilterBox>
              <Caption>Filter</Caption>
              <Dropdown><span>Office List: Organic Dentistry (101)</span><Chevron /></Dropdown>
            </FilterBox>
            <CopyRow>
              <RadioLabel><input type="radio" name="mode" defaultChecked />Append</RadioLabel>
              <RadioLabel><input type="radio" name="mode" />Overwrite</RadioLabel>
              <Caption>Copy Holiday from</Caption>
              <Dropdown $pr={41}><span>Office List: Select One</span><Chevron /></Dropdown>
              <Dropdown><span>Provider List: Select One</span><Chevron /></Dropdown>
            </CopyRow>
            <DateRow>
              <Caption $sp={0.7}>From Date</Caption>
              <DateField><FaCalendarAlt /></DateField>
              <span />
              <Caption $sp={0.7}>To Date</Caption>
              <DateField><FaCalendarAlt /></DateField>
              <span />
              <SmallButton $w={97} $gap={9} $sp={0.3} $up={1}><FaRegHandPointer />SELECT</SmallButton>
            </DateRow>
            <HeadRow>
              <HeadCell><HeadCheck /></HeadCell>
              {columns.map((c) => (
                <HeadCell key={c}>{c}</HeadCell>
              ))}
              <HeadCell />
            </HeadRow>
            <Row $h={11}>
              {Array.from({ length: 10 }, (_, i) => <Cell key={i} />)}
            </Row>
            {holidays.map((h, i) => (
              <Row key={h[0]} $tint={i % 2 === 0} $marked={i === holidays.length - 1}>
                <Cell><RowCheck /></Cell>
                {h.map((v, j) => (
                  <Cell key={j} $tight={j === 0}>{v}</Cell>
                ))}
                <Cell />
                <Cell />
                <ActionCell>
                  <FaPencilAlt color="#1f6fbf" />
                  <FaTrashAlt color="#e8000f" />
                </ActionCell>
              </Row>
            ))}
            <AddLine>
              <SmallButton $w={193} $gap={9} $sp={0.6}><FaPlus size={12} />ADD NEW HOLIDAYS</SmallButton>
            </AddLine>
          </ModalBody>
          <ModalFoot>
            <SaveButton><FaSave />SAVE</SaveButton>
            <SmallButton $w={100} $gap={10} $bg="#7b8794"><FaTimes size={13} />CANCEL</SmallButton>
          </ModalFoot>
        </Modal>
      </Workspace>

      <PageFoot>
        <FootLine>© 2023 Planet DDS | <a href="#privacy">Privacy Policy</a> |  <TimeLeft>Page Time Left (hh:mm:ss) 1:55:5</TimeLeft></FootLine>
      </PageFoot>
    </Page>
  );
}
